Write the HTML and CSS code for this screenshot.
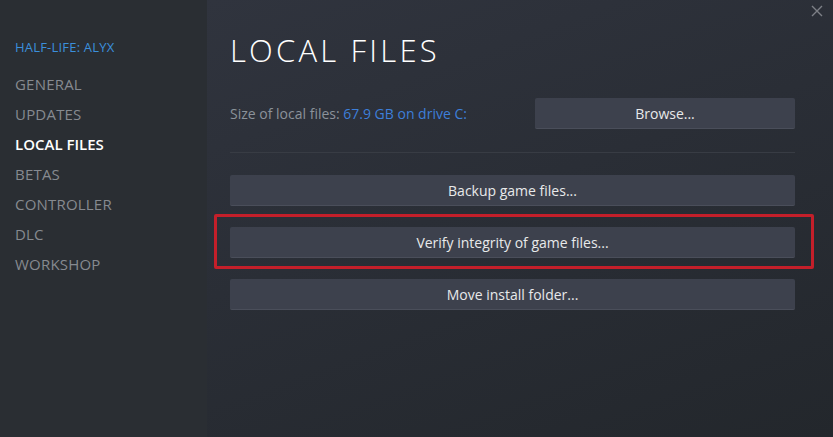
FILE: index.html
```html
<!DOCTYPE html>
<html lang="en">
<head>
  <meta charset="UTF-8" />
  <title>Half-Life: Alyx — Properties</title>
  <link rel="stylesheet" href="styles.css">
</head>
<body>
  <div class="window">
    <!-- Sidebar -->
    <nav class="sidebar">
      <div class="game-title">HALF-LIFE: ALYX</div>
      <a href="#" class="nav-item">GENERAL</a>
      <a href="#" class="nav-item">UPDATES</a>
      <a href="#" class="nav-item active">LOCAL FILES</a>
      <a href="#" class="nav-item">BETAS</a>
      <a href="#" class="nav-item">CONTROLLER</a>
      <a href="#" class="nav-item">DLC</a>
      <a href="#" class="nav-item">WORKSHOP</a>
    </nav>

    <!-- Content -->
    <main class="content">
      <h1>LOCAL FILES</h1>
      <div class="size-row">
        <p>Size of local files: <span class="link">67.9 GB on drive C:</span></p>
        <button class="btn browse">Browse...</button>
      </div>
      <div class="separator"></div>
      <button class="btn">Backup game files...</button>
      <div class="highlight">
        <button class="btn">Verify integrity of game files...</button>
      </div>
      <button class="btn">Move install folder...</button>
    </main>

    <button class="close" aria-label="Close">
      <svg width="12" height="12" viewBox="0 0 12 12"><path d="M1 1 L11 11 M11 1 L1 11" stroke="#7d8087" stroke-width="1.4"/></svg>
    </button>
  </div>
</body>
</html>
```

FILE: styles.css
```css
* { margin: 0; padding: 0; box-sizing: border-box; }
body {
  width: 833px; height: 437px; overflow: hidden;
  font-family: "Open Sans", "Noto Sans", sans-serif;
  background: #25292e;
}
.window {
  position: relative; display: flex; width: 833px; height: 437px;
}

.sidebar {
  width: 207px; flex-shrink: 0; background: #2a2e33;
  padding: 38px 0 0 15px; display: flex; flex-direction: column;
}
.game-title {
  color: #3b8fdc; font-size: 13px; letter-spacing: 0.2px; height: 18px; line-height: 18px;
  margin-bottom: 13px;
}
.nav-item {
  color: #868a90; font-size: 15px; text-decoration: none;
  height: 30px; line-height: 30px; letter-spacing: 0.2px;
}
.nav-item.active { color: #fff; font-weight: 600; letter-spacing: 0; }

.content {
  flex: 1; padding: 29px 38px 0 23px;
  background: linear-gradient(160deg, #30343e 0%, #2a2e36 45%, #23272c 100%);
  display: flex; flex-direction: column;
}
h1 {
  color: #fff; font-weight: 300; font-size: 31px; letter-spacing: 3.2px;
  line-height: 42px; margin-bottom: 27px;
}
.size-row {
  display: flex; align-items: center; justify-content: space-between;
}
.size-row p { color: #8b929a; font-size: 14px; }
.link { color: #3d7fd9; }

.btn {
  display: block; width: 100%; height: 31px;
  background: #3d414d; border: none; border-bottom: 1px solid #4a4e5a;
  border-radius: 2px; color: #e8e9ea; font-family: inherit; font-size: 14px;
  cursor: pointer;
}
.btn.browse { width: 260px; }

.separator {
  height: 1px; background: #383c44; margin: 23px 0 22px;
}

.highlight {
  margin: 8px -19px 10px -16px; padding: 10px 16px 8px 13px;
  border: 3px solid #c41f2a; border-radius: 2px;
}

.close {
  position: absolute; top: 4px; right: 9px; background: none; border: none;
  width: 14px; height: 14px; display: flex; align-items: center; justify-content: center;
}
```
